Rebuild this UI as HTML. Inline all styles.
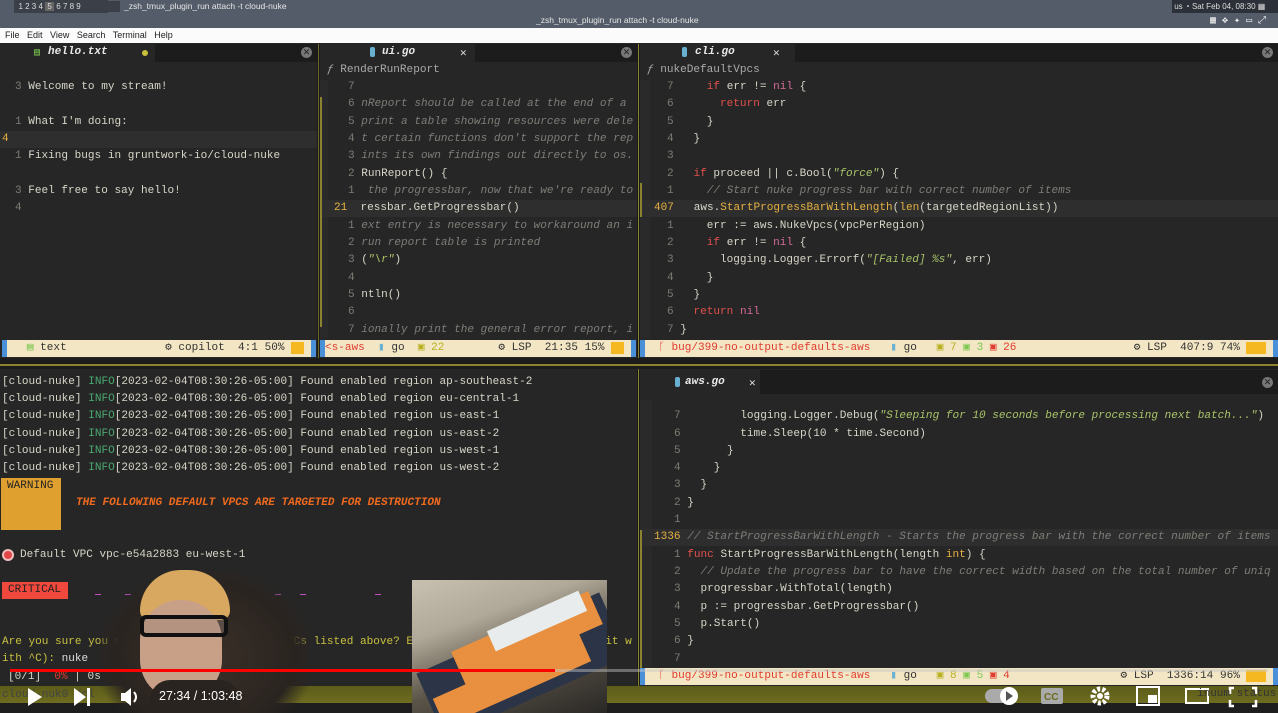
<!DOCTYPE html>
<html><head><meta charset="utf-8"><style>
*{margin:0;padding:0;box-sizing:border-box}
body{width:1278px;height:713px;overflow:hidden;background:#262626;position:relative;font-family:"Liberation Mono","DejaVu Sans Mono",monospace;font-size:11.05px;color:#d8d6c8}
.a{position:absolute;white-space:pre}
.l{position:absolute;white-space:pre;height:17px;line-height:17px}
.g{color:#7c7c74}
.k{color:#e2504c}
.n{color:#d66a9a}
.f{color:#e6b042}
.c{color:#7e7e78;font-style:italic}
.s{color:#a9c46a;font-style:italic}
.sans{font-family:"Liberation Sans",sans-serif}
.sb{position:absolute;height:17px;background:#f3e6c4;border-left:5px solid #4a90d9;border-right:5px solid #4a90d9;color:#333;line-height:17px;white-space:pre;display:flex;overflow:hidden}
.sb .r{margin-left:auto}
.tab{position:absolute;background:#1c1c1c}
.x{position:absolute;width:11px;height:11px;border-radius:50%;background:#777;color:#222;font-size:9px;line-height:11px;text-align:center;font-family:"Liberation Sans",sans-serif}
</style></head><body>
<!-- top bars -->
<div class="a" style="left:0;top:0;width:1278px;height:28px;background:#545c69"></div>
<div class="a sans" style="left:14px;top:0;width:94px;height:13px;background:#3a3f48;color:#ddd;font-size:8px;line-height:13px">  1 2 3 4 <span style="background:#666"> 5 </span> 6 7 8 9</div>
<div class="a" style="left:108px;top:1px;width:12px;height:11px;background:#3a3f48"></div>
<div class="a sans" style="left:124px;top:1px;color:#e6e6e6;font-size:8.5px">_zsh_tmux_plugin_run attach -t cloud-nuke</div>
<div class="a sans" style="left:536px;top:15px;color:#e6e6e6;font-size:8.5px">_zsh_tmux_plugin_run attach -t cloud-nuke</div>
<div class="a sans" style="left:1172px;top:0;width:106px;height:13px;background:#2c3038;color:#ddd;font-size:8px;line-height:13px"> us ◔ Sat Feb 04, 08:30 ▦</div>
<div class="a" style="left:1210px;top:15px;color:#eee;font-size:10px">▦ ✥ ✦ ▭ ⤢</div>
<div class="a sans" style="left:0;top:28px;width:1278px;height:15px;background:#fbfbfb;color:#222;font-size:9px;line-height:15px">  File   Edit   View   Search   Terminal   Help</div>
<!-- pane separators -->
<div class="a" style="left:317px;top:44px;width:3px;height:316px;background:#1a1a1a"></div>
<div class="a" style="left:318px;top:44px;width:1px;height:316px;background:#6f6a2a"></div>
<div class="a" style="left:637px;top:44px;width:3px;height:646px;background:#1a1a1a"></div>
<div class="a" style="left:638px;top:44px;width:1px;height:646px;background:#8a8430"></div>
<div class="a" style="left:0;top:358px;width:1278px;height:11px;background:#1c1c1c"></div>
<div class="a" style="left:0;top:364px;width:1278px;height:2px;background:#8a8430"></div>
<!-- tabs top -->
<div class="tab" style="left:0;top:44px;width:317px;height:18px"></div>
<div class="tab" style="left:0;top:44px;width:155px;height:18px;background:#262626"></div>
<div class="a" style="left:34px;top:47px;color:#7cc850;font-size:10px">▤</div>
<div class="a" style="left:48px;top:46px;font-weight:bold;font-style:italic;color:#e8e8e8">hello.txt</div>
<div class="a" style="left:142px;top:50px;width:6px;height:6px;border-radius:3px;background:#c8c03c"></div>
<div class="x" style="left:301px;top:47px">✕</div>
<div class="tab" style="left:320px;top:44px;width:317px;height:18px"></div>
<div class="tab" style="left:320px;top:44px;width:155px;height:18px;background:#262626"></div>
<div class="a" style="left:370px;top:47px;width:5px;height:10px;border-radius:2px;background:#6ab0d0"></div>
<div class="a" style="left:382px;top:46px;font-weight:bold;font-style:italic;color:#e8e8e8">ui.go</div>
<div class="a" style="left:460px;top:46px;color:#ddd">✕</div>
<div class="x" style="left:621px;top:47px">✕</div>
<div class="tab" style="left:640px;top:44px;width:638px;height:18px"></div>
<div class="tab" style="left:640px;top:44px;width:155px;height:18px;background:#262626"></div>
<div class="a" style="left:682px;top:47px;width:5px;height:10px;border-radius:2px;background:#6ab0d0"></div>
<div class="a" style="left:695px;top:46px;font-weight:bold;font-style:italic;color:#e8e8e8">cli.go</div>
<div class="a" style="left:773px;top:46px;color:#ddd">✕</div>
<div class="x" style="left:1262px;top:47px">✕</div>
<!-- left pane -->
<div class="l" style="left:15px;top:79px"><span class="g">3</span> Welcome to my stream!</div>
<div class="l" style="left:15px;top:114px"><span class="g">1</span> What I'm doing:</div>
<div class="a" style="left:0;top:131px;width:317px;height:17px;background:#2e2e2e"></div>
<div class="l" style="left:2px;top:131px;color:#e6b042">4</div>
<div class="l" style="left:15px;top:148px"><span class="g">1</span> Fixing bugs in gruntwork-io/cloud-nuke</div>
<div class="l" style="left:15px;top:183px"><span class="g">3</span> Feel free to say hello!</div>
<div class="l g" style="left:15px;top:200px">4</div>
<!-- middle pane -->
<div class="l" style="left:327px;top:62px;color:#aaa"><i>ƒ</i> RenderRunReport</div>
<div class="a" style="left:320px;top:80px;width:8px;height:258px;background:#2a2a2a"></div>
<div class="a" style="left:320px;top:97px;width:2px;height:230px;background:#8a8430"></div>
<div class="l g" style="left:348px;top:79px">7</div>
<div class="l" style="left:348px;top:96px"><span class="g">6</span> <span class="c">nReport should be called at the end of a</span></div>
<div class="l" style="left:348px;top:114px"><span class="g">5</span> <span class="c">print a table showing resources were dele</span></div>
<div class="l" style="left:348px;top:131px"><span class="g">4</span> <span class="c">t certain functions don't support the rep</span></div>
<div class="l" style="left:348px;top:148px"><span class="g">3</span> <span class="c">ints its own findings out directly to os.</span></div>
<div class="l" style="left:348px;top:166px"><span class="g">2</span> RunReport() {</div>
<div class="l" style="left:348px;top:183px"><span class="g">1</span> <span class="c"> the progressbar, now that we're ready to</span></div>
<div class="a" style="left:322px;top:200px;width:315px;height:17px;background:#2e2e2e"></div>
<div class="l" style="left:334px;top:200px"><span class="f">21</span>  ressbar.GetProgressbar()</div>
<div class="l" style="left:348px;top:218px"><span class="g">1</span> <span class="c">ext entry is necessary to workaround an i</span></div>
<div class="l" style="left:348px;top:235px"><span class="g">2</span> <span class="c">run report table is printed</span></div>
<div class="l" style="left:348px;top:252px"><span class="g">3</span> (<span class="s">"\r"</span>)</div>
<div class="l g" style="left:348px;top:270px">4</div>
<div class="l" style="left:348px;top:287px"><span class="g">5</span> ntln()</div>
<div class="l g" style="left:348px;top:304px">6</div>
<div class="l" style="left:348px;top:322px"><span class="g">7</span> <span class="c">ionally print the general error report, i</span></div>
<!-- right pane -->
<div class="l" style="left:647px;top:62px;color:#aaa"><i>ƒ</i> nukeDefaultVpcs</div>
<div class="a" style="left:640px;top:80px;width:10px;height:258px;background:#2a2a2a"></div>
<div class="a" style="left:640px;top:183px;width:2px;height:34px;background:#8a8430"></div>
<div class="l" style="left:667px;top:79px"><span class="g">7</span>     <span class="k">if</span> err != <span class="n">nil</span> {</div>
<div class="l" style="left:667px;top:96px"><span class="g">6</span>       <span class="k">return</span> err</div>
<div class="l" style="left:667px;top:114px"><span class="g">5</span>     }</div>
<div class="l" style="left:667px;top:131px"><span class="g">4</span>   }</div>
<div class="l g" style="left:667px;top:148px">3</div>
<div class="l" style="left:667px;top:166px"><span class="g">2</span>   <span class="k">if</span> proceed || c.Bool(<span class="s">"force"</span>) {</div>
<div class="l" style="left:667px;top:183px"><span class="g">1</span>     <span class="c">// Start nuke progress bar with correct number of items</span></div>
<div class="a" style="left:642px;top:200px;width:636px;height:17px;background:#2e2e2e"></div>
<div class="l" style="left:654px;top:200px"><span class="f">407</span>   aws.<span class="f">StartProgressBarWithLength</span>(<span class="f">len</span>(targetedRegionList))</div>
<div class="l" style="left:667px;top:218px"><span class="g">1</span>     err := aws.NukeVpcs(vpcPerRegion)</div>
<div class="l" style="left:667px;top:235px"><span class="g">2</span>     <span class="k">if</span> err != <span class="n">nil</span> {</div>
<div class="l" style="left:667px;top:252px"><span class="g">3</span>       logging.Logger.Errorf(<span class="s">"[Failed] %s"</span>, err)</div>
<div class="l" style="left:667px;top:270px"><span class="g">4</span>     }</div>
<div class="l" style="left:667px;top:287px"><span class="g">5</span>   }</div>
<div class="l" style="left:667px;top:304px"><span class="g">6</span>   <span class="k">return</span> <span class="n">nil</span></div>
<div class="l" style="left:667px;top:322px"><span class="g">7</span> }</div>
<!-- status bars top -->
<div class="sb" style="left:2px;top:340px;width:314px"><span><span style="color:#7cc850">   ▤</span> text</span><span class="r">⚙ copilot  4:1 50% <span style="background:#f6b820">  </span> </span></div>
<div class="sb" style="left:320px;top:340px;width:316px"><span><span style="color:#e03c30">&lt;s-aws</span>  <span style="color:#6ab0d0">▮</span> go  <span style="color:#b8b020">▣ 22</span></span><span class="r">⚙ LSP  21:35 15% <span style="background:#f6b820">  </span> </span></div>
<div class="sb" style="left:640px;top:340px;width:638px"><span><span style="color:#e03c30">  ᚴ bug/399-no-output-defaults-aws</span>   <span style="color:#6ab0d0">▮</span> go   <span style="color:#b8b020">▣ 7</span> <span style="color:#7cc850">▣ 3</span> <span style="color:#e03c30">▣ 26</span></span><span class="r">⚙ LSP  407:9 74% <span style="background:#f6b820">   </span> </span></div>
<!-- terminal -->
<div class="a" style="left:0;top:370px;width:637px;height:320px;background:#262626"></div>
<div class="l" style="left:2px;top:374px">[cloud-nuke] <span style="color:#4aa870">INFO</span>[2023-02-04T08:30:26-05:00] Found enabled region ap-southeast-2</div>
<div class="l" style="left:2px;top:391px">[cloud-nuke] <span style="color:#4aa870">INFO</span>[2023-02-04T08:30:26-05:00] Found enabled region eu-central-1</div>
<div class="l" style="left:2px;top:408px">[cloud-nuke] <span style="color:#4aa870">INFO</span>[2023-02-04T08:30:26-05:00] Found enabled region us-east-1</div>
<div class="l" style="left:2px;top:426px">[cloud-nuke] <span style="color:#4aa870">INFO</span>[2023-02-04T08:30:26-05:00] Found enabled region us-east-2</div>
<div class="l" style="left:2px;top:443px">[cloud-nuke] <span style="color:#4aa870">INFO</span>[2023-02-04T08:30:26-05:00] Found enabled region us-west-1</div>
<div class="l" style="left:2px;top:460px">[cloud-nuke] <span style="color:#4aa870">INFO</span>[2023-02-04T08:30:26-05:00] Found enabled region us-west-2</div>
<div class="a" style="left:1px;top:478px;width:60px;height:52px;background:#e0a030;color:#222;padding:2px 6px">WARNING</div>
<div class="l" style="left:76px;top:495px;color:#f06a1e;font-weight:bold;font-style:italic">THE FOLLOWING DEFAULT VPCS ARE TARGETED FOR DESTRUCTION</div>
<div class="a" style="left:2px;top:549px;width:12px;height:12px;border-radius:6px;background:#e04848;border:2px solid #f0c0c0"></div>
<div class="l" style="left:20px;top:547px">Default VPC vpc-e54a2883 eu-west-1</div>
<div class="a" style="left:2px;top:582px;width:66px;height:17px;background:#f0483c;color:#222;line-height:17px;padding-left:6px">CRITICAL</div>
<div class="a" style="left:95px;top:594px;width:6px;height:1px;background:#c050c0;box-shadow:30px 0 #c050c0,180px 0 #c050c0,205px 0 #c050c0,280px 0 #c050c0"></div>
<div class="l" style="left:2px;top:634px;color:#c8c040">Are you sure you want to nuke the default VPCs listed above? Enter 'nuke' to confirm (or exit w</div>
<div class="l" style="left:2px;top:651px;color:#c8c040">ith ^C): <span style="color:#ddd">nuke</span></div>
<div class="l" style="left:8px;top:669px">[0/1]  <span style="color:#e03c30">0%</span> | 0s</div>
<!-- bottom right editor -->
<div class="tab" style="left:640px;top:370px;width:638px;height:24px"></div>
<div class="tab" style="left:640px;top:370px;width:120px;height:24px;background:#262626"></div>
<div class="a" style="left:675px;top:377px;width:5px;height:10px;border-radius:2px;background:#6ab0d0"></div>
<div class="a" style="left:685px;top:376px;font-weight:bold;font-style:italic;color:#e8e8e8">aws.go</div>
<div class="a" style="left:749px;top:376px;color:#ddd">✕</div>
<div class="x" style="left:1262px;top:377px">✕</div>
<div class="a" style="left:640px;top:400px;width:12px;height:268px;background:#2a2a2a"></div>
<div class="a" style="left:640px;top:530px;width:2px;height:138px;background:#8a8430"></div>
<div class="l" style="left:674px;top:408px"><span class="g">7</span>         logging.Logger.Debug(<span class="s">"Sleeping for 10 seconds before processing next batch..."</span>)</div>
<div class="l" style="left:674px;top:426px"><span class="g">6</span>         time.Sleep(10 * time.Second)</div>
<div class="l" style="left:674px;top:443px"><span class="g">5</span>       }</div>
<div class="l" style="left:674px;top:460px"><span class="g">4</span>     }</div>
<div class="l" style="left:674px;top:477px"><span class="g">3</span>   }</div>
<div class="l" style="left:674px;top:495px"><span class="g">2</span> }</div>
<div class="l g" style="left:674px;top:512px">1</div>
<div class="a" style="left:642px;top:529px;width:636px;height:17px;background:#2e2e2e"></div>
<div class="l" style="left:654px;top:529px"><span class="f">1336</span> <span class="c">// StartProgressBarWithLength - Starts the progress bar with the correct number of items</span></div>
<div class="l" style="left:674px;top:547px"><span class="g">1</span> <span class="k">func</span> StartProgressBarWithLength(length <span class="f">int</span>) {</div>
<div class="l" style="left:674px;top:564px"><span class="g">2</span>   <span class="c">// Update the progress bar to have the correct width based on the total number of uniq</span></div>
<div class="l" style="left:674px;top:581px"><span class="g">3</span>   progressbar.WithTotal(length)</div>
<div class="l" style="left:674px;top:599px"><span class="g">4</span>   p := progressbar.GetProgressbar()</div>
<div class="l" style="left:674px;top:616px"><span class="g">5</span>   p.Start()</div>
<div class="l" style="left:674px;top:633px"><span class="g">6</span> }</div>
<div class="l g" style="left:674px;top:651px">7</div>
<div class="sb" style="left:640px;top:668px;width:638px"><span><span style="color:#e03c30">  ᚴ bug/399-no-output-defaults-aws</span>   <span style="color:#6ab0d0">▮</span> go   <span style="color:#b8b020">▣ 8</span> <span style="color:#7cc850">▣ 5</span> <span style="color:#e03c30">▣ 4</span></span><span class="r">⚙ LSP  1336:14 96% <span style="background:#f6b820">   </span> </span></div>
<!-- yt control bar -->
<div class="a" style="left:0;top:686px;width:1278px;height:27px;background:#6b6a1c"></div>
<div class="a" style="left:0;top:703px;width:1278px;height:10px;background:#1e1e1e"></div>
<div class="a" style="left:0;top:686px;width:1278px;height:17px;background:linear-gradient(#5c5c1a,#6e6c20)"></div>
<div class="l" style="left:2px;top:687px;color:#444">cloud-nuk0 /cl</div>
<!-- webcam -->
<div class="a" style="left:100px;top:570px;width:210px;height:143px;background:radial-gradient(ellipse at 50% 60%,#3a3028 0%,#2a2420 60%,rgba(30,30,30,0) 75%)"></div>
<div class="a" style="left:140px;top:570px;width:90px;height:50px;border-radius:45px 45px 10px 10px;background:#d8a860"></div>
<div class="a" style="left:140px;top:600px;width:82px;height:100px;border-radius:40px;background:#c8a088"></div>
<div class="a" style="left:140px;top:615px;width:88px;height:22px;border:4px solid #111;border-radius:6px;background:rgba(150,130,120,.4)"></div>
<div class="a" style="left:150px;top:680px;width:90px;height:33px;background:#2a2420;border-radius:20px 20px 0 0"></div>
<!-- keyboard image -->
<div class="a" style="left:412px;top:580px;width:195px;height:133px;background:linear-gradient(160deg,#c8c0b0 0%,#b0a898 30%,#5a5448 60%,#2a2826 100%);overflow:hidden">
 <div style="position:absolute;left:10px;top:50px;width:200px;height:70px;transform:rotate(-24deg);background:#2c3448"></div>
 <div style="position:absolute;left:40px;top:40px;width:150px;height:36px;transform:rotate(-24deg);background:#e89040"></div>
 <div style="position:absolute;left:75px;top:30px;width:100px;height:22px;transform:rotate(-24deg);background:#e8ecec"></div>
 <div style="position:absolute;left:20px;top:85px;width:160px;height:30px;transform:rotate(-24deg);background:#e89040"></div>
</div>
<!-- progress line -->
<div class="a" style="left:10px;top:669px;width:1258px;height:3px;background:rgba(200,200,200,.45)"></div>
<div class="a" style="left:10px;top:669px;width:545px;height:3px;background:#f00"></div>
<!-- controls -->
<svg class="a" style="left:0;top:680px" width="1278" height="33">
<polygon points="28,8 28,26 42,17" fill="#fff"/>
<polygon points="74,8 74,26 86,17" fill="#fff"/><rect x="87" y="8" width="3" height="18" fill="#fff"/>
<polygon points="121,13 125,13 131,8 131,26 125,21 121,21" fill="#fff"/><path d="M134 12 q4 5 0 10" stroke="#fff" stroke-width="2" fill="none"/>
<rect x="985" y="9" width="26" height="14" rx="7" fill="#aaa"/><circle cx="1009" cy="16" r="9" fill="#fff"/><polygon points="1006,11 1006,21 1013,16" fill="#555"/>
<rect x="1041" y="8" width="22" height="16" rx="2" fill="#aaa"/><text x="1044" y="20" font-family="Liberation Sans" font-size="10" font-weight="bold" fill="#6b6a1c">CC</text>
<circle cx="1100" cy="16" r="7" fill="none" stroke="#fff" stroke-width="5" stroke-dasharray="3 2"/><circle cx="1100" cy="16" r="3" fill="#fff"/>
<rect x="1137" y="7" width="22" height="18" fill="none" stroke="#fff" stroke-width="2"/><rect x="1148" y="15" width="9" height="8" fill="#fff"/>
<rect x="1186" y="9" width="22" height="14" fill="none" stroke="#fff" stroke-width="2"/>
<path d="M1234 8h-4v6M1252 8h4v6M1234 26h-4v-6M1252 26h4v-6" stroke="#fff" stroke-width="2.5" fill="none"/>
</svg>
<div class="a sans" style="left:159px;top:689px;color:#fff;font-size:12.5px">27:34 / 1:03:48</div>
<div class="a" style="left:1197px;top:688px;color:#333;font-size:11px">inuum status: off</div>
</body></html>
